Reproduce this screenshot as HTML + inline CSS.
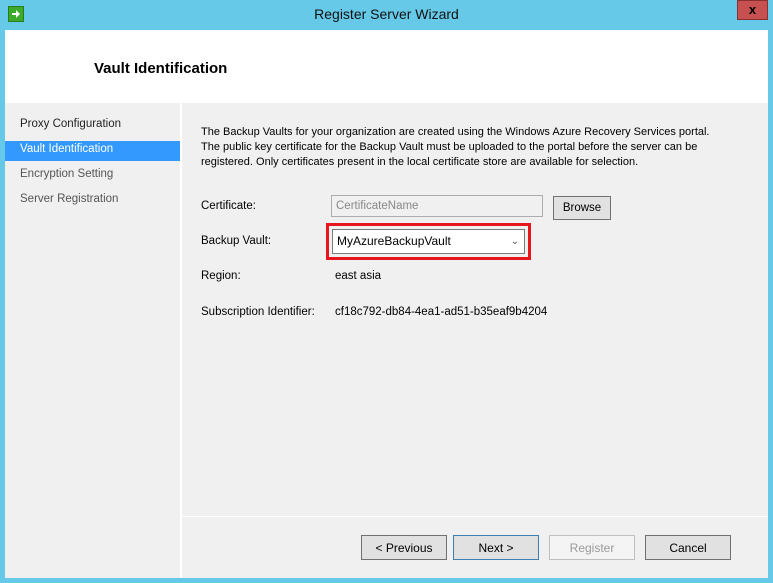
<!DOCTYPE html>
<html><head><style>
body{margin:0;width:773px;height:583px;background:#66c9e8;font-family:"Liberation Sans",sans-serif;font-size:11.5px;color:#000;position:relative;overflow:hidden}
.a{position:absolute}
.btn{position:absolute;top:535px;height:25px;box-sizing:border-box;border:1px solid #707070;background:#e1e1e1;text-align:center;line-height:24px;font-size:12px}
</style></head><body>
<div class="a" style="left:8px;top:6px;width:14px;height:14px;background:#3cab2c;border:1px solid #2a7a1e"><svg width="14" height="14"><path d="M3 6h4V3l4 4-4 4V8H3z" fill="#fff"/></svg></div>
<div class="a" style="left:0;top:6px;width:773px;text-align:center;font-size:14px;color:#111">Register Server Wizard</div>
<div class="a" style="left:737px;top:0;width:31px;height:20px;background:#c75050;border:1px solid #8a3030;box-sizing:border-box;text-align:center;font-weight:bold;font-size:13px;line-height:18px">x</div>
<div class="a" style="left:5px;top:30px;width:763px;height:548px;background:#f0f0f0"></div>
<div class="a" style="left:5px;top:30px;width:763px;height:73px;background:#fff"></div>
<div class="a" style="left:94px;top:60px;font-size:15px;font-weight:bold">Vault Identification</div>
<div class="a" style="left:180px;top:103px;width:2px;height:475px;background:#fff"></div>
<div class="a" style="left:182px;top:516px;width:586px;height:1px;background:#fff"></div>
<div class="a" style="left:20px;top:118px;color:#222">Proxy Configuration</div>
<div class="a" style="left:5px;top:141px;width:175px;height:20px;background:#3399ff"></div>
<div class="a" style="left:20px;top:143px;color:#fff">Vault Identification</div>
<div class="a" style="left:20px;top:168px;color:#555">Encryption Setting</div>
<div class="a" style="left:20px;top:193px;color:#555">Server Registration</div>
<div class="a" style="left:201px;top:125px;width:560px;line-height:15px;font-size:11px;white-space:nowrap">The Backup Vaults for your organization are created using the Windows Azure Recovery Services portal.<br>The public key certificate for the Backup Vault must be uploaded to the portal before the server can be<br>registered. Only certificates present in the local certificate store are available for selection.</div>
<div class="a" style="left:201px;top:200px">Certificate:</div>
<div class="a" style="left:331px;top:195px;width:212px;height:22px;border:1px solid #adadad;box-sizing:border-box;background:#f0f0f0;color:#888;padding-left:4px;line-height:20px">CertificateName</div>
<div class="a" style="left:553px;top:196px;width:58px;height:24px;border:1px solid #707070;box-sizing:border-box;background:#e1e1e1;text-align:center;line-height:23px">Browse</div>
<div class="a" style="left:201px;top:235px">Backup Vault:</div>
<div class="a" style="left:326px;top:223px;width:205px;height:37px;border:3px solid #e8141e;box-sizing:border-box"></div>
<div class="a" style="left:332px;top:229px;width:193px;height:25px;border:1px solid #7a7a7a;box-sizing:border-box;background:#fff;padding-left:4px;line-height:23px;font-size:12px">MyAzureBackupVault<span style="position:absolute;right:5px;top:0;color:#555;font-size:10px">&#8964;</span></div>
<div class="a" style="left:201px;top:270px">Region:</div>
<div class="a" style="left:335px;top:270px">east asia</div>
<div class="a" style="left:201px;top:306px">Subscription Identifier:</div>
<div class="a" style="left:335px;top:306px">cf18c792-db84-4ea1-ad51-b35eaf9b4204</div>
<div class="btn" style="left:361px;width:86px">&lt; Previous</div>
<div class="btn" style="left:453px;width:86px;border-color:#3c7fb1">Next &gt;</div>
<div class="btn" style="left:549px;width:86px;border-color:#bfbfbf;background:#f4f4f4;color:#999">Register</div>
<div class="btn" style="left:645px;width:86px">Cancel</div>
</body></html>
